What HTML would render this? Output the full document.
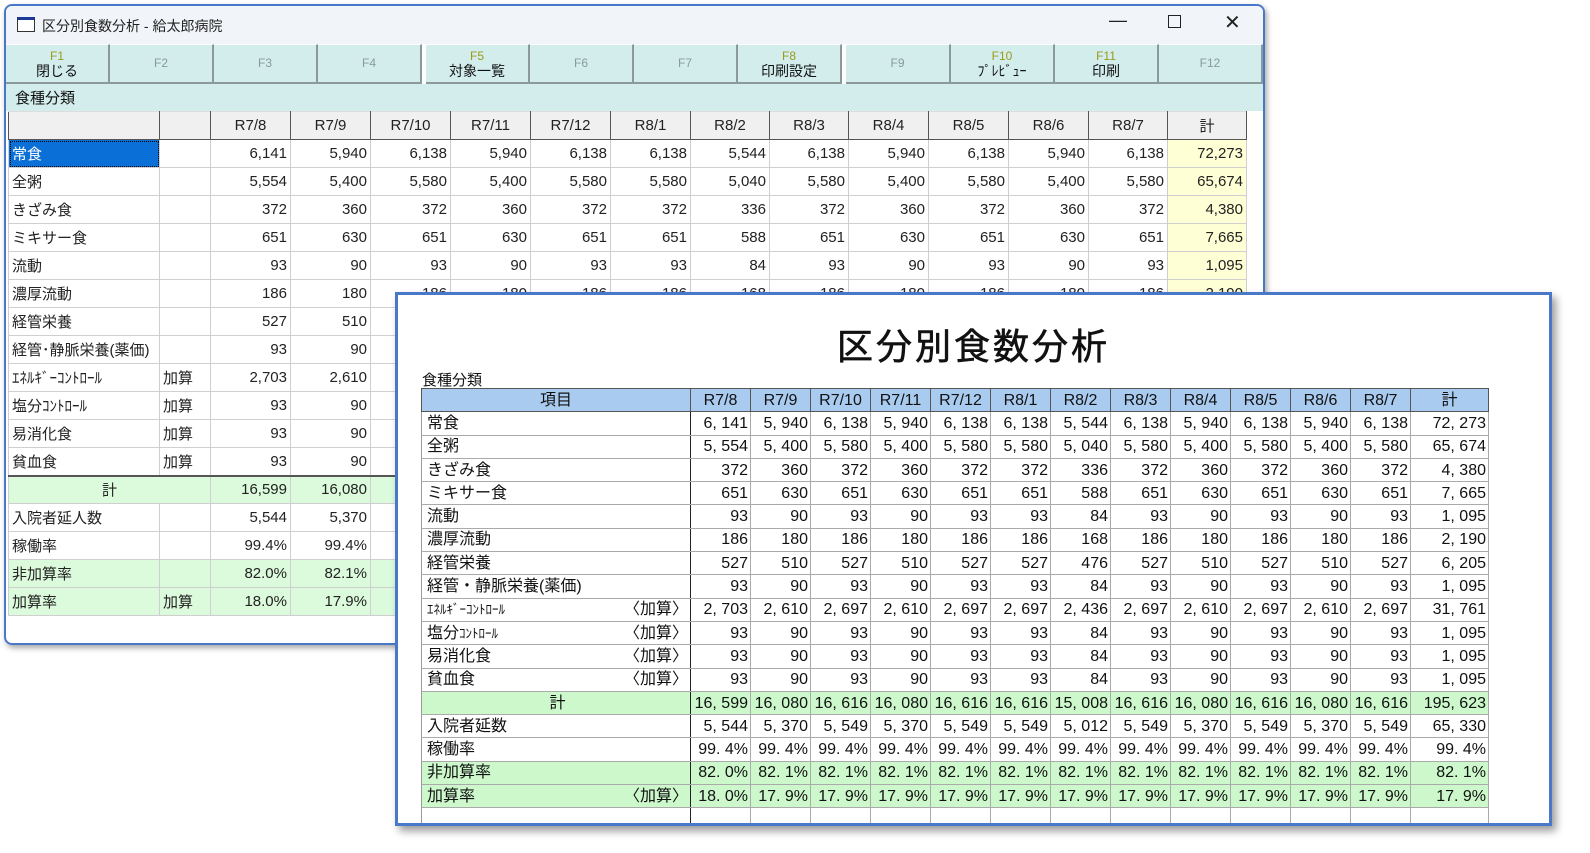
<!DOCTYPE html>
<html><head><meta charset="utf-8">
<style>
*{margin:0;padding:0;box-sizing:border-box}
body{width:1590px;height:853px;background:#fff;position:relative;overflow:hidden;font-family:"Liberation Sans","Noto Sans CJK JP",sans-serif}
#back{position:absolute;left:4px;top:4px;width:1261px;height:641px;border:2px solid #4a78c8;border-radius:8px;background:#fff;box-shadow:2px 3px 6px rgba(0,0,0,.35);overflow:hidden}
#title{position:absolute;left:0;top:0;width:100%;height:38px;background:#f1f4f9;font-size:14px;color:#222}
#title .ic{position:absolute;left:11px;top:11px;width:18px;height:15px;border:1px solid #333;border-top:3px solid #1a3a9a;background:#fff}
#title .t{position:absolute;left:36px;top:10px}
#title .b{position:absolute;top:6px;font-size:18px;color:#222}
#fk{position:absolute;left:0;top:38px;width:100%;height:40px;background:#fff}
.fb{position:absolute;top:0;height:40px;background:#d3eded;border-right:2px solid #8a9a9a;border-bottom:2px solid #8a9a9a;border-top:1px solid #fff;text-align:center;font-size:12px;line-height:13px;color:#8a9a9a;padding-top:5px}
.fb.on span{color:#9a9a1a}
.fb b{display:block;font-weight:normal;color:#111;font-size:14px;line-height:16px}
.fb.off{padding-top:12px}
#sec{position:absolute;left:0;top:78px;width:100%;height:27px;background:#d3eded;font-size:15px;padding:3px 9px;color:#111}
#bt{position:absolute;left:2px;top:105px;border-collapse:collapse;table-layout:fixed;font-size:15px;color:#222}
#bt td{height:28px;border:1px solid #cfcfcf;padding:0 3px;text-align:right;white-space:nowrap;overflow:hidden}
#bt td.l{text-align:left}
#bt tr.h td{background:#f0f0f0;border:1px solid #555;border-top:1px solid #ddd;text-align:center}
#bt td.y{background:#ffffd6}
#bt tr.g td{background:#dcfadc}
#bt tr.k td{border-top:2px solid #555}
#bt td.sel{background:#0a6fd6;color:#fff;outline:1px dotted #000;outline-offset:-2px}
#front{position:absolute;left:395px;top:292px;width:1157px;height:534px;border:3px solid #4a78c8;background:#fff;box-shadow:4px 5px 8px rgba(0,0,0,.4);overflow:hidden}
#ft{position:absolute;left:0;top:23px;width:100%;text-align:center;font-size:36px;font-weight:normal;-webkit-text-stroke:0.6px #111;color:#111;letter-spacing:3px}
#fs{position:absolute;left:24px;top:74px;font-size:15px;color:#111}
#tt{position:absolute;left:23px;top:93px;border-collapse:collapse;table-layout:fixed;font-size:16px;color:#111}
#tt td{height:23.3px;border:1px solid #aaa;border-left:1px solid #999;padding:0 2px;text-align:right;white-space:nowrap;overflow:hidden;line-height:21px}
#tt td.l{text-align:left;padding-left:5px;border-right:1.5px solid #222}
#tt td.t{border-left:1.5px solid #222}
#tt tr.h td{background:#a8cbef;text-align:center;border:1px solid #555}
#tt tr.g td{background:#ccf8cc}
#tt .r{float:right}
</style></head><body>
<div id="back">
 <div id="title"><div class="ic"></div><div class="t">区分別食数分析 - 給太郎病院</div>
  <div class="b" style="left:1103px;top:4px">&#8212;</div>
  <div class="b" style="left:1162px;top:9px;width:13px;height:13px;border:1.5px solid #222"></div>
  <div class="b" style="left:1218px;top:4px;font-size:20px">&#10005;</div>
 </div>
 <div id="fk">
  <div class="fb on" style="left:0;width:104px"><span>F1</span><b>閉じる</b></div>
  <div class="fb off" style="left:104px;width:104px">F2</div>
  <div class="fb off" style="left:208px;width:104px">F3</div>
  <div class="fb off" style="left:312px;width:104px">F4</div>
  <div class="fb on" style="left:420px;width:104px"><span>F5</span><b>対象一覧</b></div>
  <div class="fb off" style="left:524px;width:104px">F6</div>
  <div class="fb off" style="left:628px;width:104px">F7</div>
  <div class="fb on" style="left:732px;width:104px"><span>F8</span><b>印刷設定</b></div>
  <div class="fb off" style="left:840px;width:105px">F9</div>
  <div class="fb on" style="left:945px;width:104px"><span>F10</span><b>ﾌﾟﾚﾋﾞｭｰ</b></div>
  <div class="fb on" style="left:1049px;width:104px"><span>F11</span><b>印刷</b></div>
  <div class="fb off" style="left:1153px;width:104px">F12</div>
 </div>
 <div id="sec">食種分類</div>
 <table id="bt">
 <colgroup><col style="width:151px"><col style="width:51px"><col style="width:80px"><col style="width:80px"><col style="width:80px"><col style="width:80px"><col style="width:80px"><col style="width:80px"><col style="width:79px"><col style="width:79px"><col style="width:80px"><col style="width:80px"><col style="width:80px"><col style="width:79px"><col style="width:79px"></colgroup>
 <tr class="h"><td></td><td></td><td>R7/8</td><td>R7/9</td><td>R7/10</td><td>R7/11</td><td>R7/12</td><td>R8/1</td><td>R8/2</td><td>R8/3</td><td>R8/4</td><td>R8/5</td><td>R8/6</td><td>R8/7</td><td>計</td></tr>
 <tr><td class="l sel">常食</td><td></td><td>6,141</td><td>5,940</td><td>6,138</td><td>5,940</td><td>6,138</td><td>6,138</td><td>5,544</td><td>6,138</td><td>5,940</td><td>6,138</td><td>5,940</td><td>6,138</td><td class="y">72,273</td></tr>
 <tr><td class="l">全粥</td><td></td><td>5,554</td><td>5,400</td><td>5,580</td><td>5,400</td><td>5,580</td><td>5,580</td><td>5,040</td><td>5,580</td><td>5,400</td><td>5,580</td><td>5,400</td><td>5,580</td><td class="y">65,674</td></tr>
 <tr><td class="l">きざみ食</td><td></td><td>372</td><td>360</td><td>372</td><td>360</td><td>372</td><td>372</td><td>336</td><td>372</td><td>360</td><td>372</td><td>360</td><td>372</td><td class="y">4,380</td></tr>
 <tr><td class="l">ミキサー食</td><td></td><td>651</td><td>630</td><td>651</td><td>630</td><td>651</td><td>651</td><td>588</td><td>651</td><td>630</td><td>651</td><td>630</td><td>651</td><td class="y">7,665</td></tr>
 <tr><td class="l">流動</td><td></td><td>93</td><td>90</td><td>93</td><td>90</td><td>93</td><td>93</td><td>84</td><td>93</td><td>90</td><td>93</td><td>90</td><td>93</td><td class="y">1,095</td></tr>
 <tr><td class="l">濃厚流動</td><td></td><td>186</td><td>180</td><td>186</td><td>180</td><td>186</td><td>186</td><td>168</td><td>186</td><td>180</td><td>186</td><td>180</td><td>186</td><td class="y">2,190</td></tr>
 <tr><td class="l">経管栄養</td><td></td><td>527</td><td>510</td><td>527</td><td>510</td><td>527</td><td>527</td><td>476</td><td>527</td><td>510</td><td>527</td><td>510</td><td>527</td><td class="y">6,205</td></tr>
 <tr><td class="l">経管･静脈栄養(薬価)</td><td></td><td>93</td><td>90</td><td>93</td><td>90</td><td>93</td><td>93</td><td>84</td><td>93</td><td>90</td><td>93</td><td>90</td><td>93</td><td class="y">1,095</td></tr>
 <tr><td class="l">ｴﾈﾙｷﾞｰｺﾝﾄﾛｰﾙ</td><td class="l">加算</td><td>2,703</td><td>2,610</td><td>2,697</td><td>2,610</td><td>2,697</td><td>2,697</td><td>2,436</td><td>2,697</td><td>2,610</td><td>2,697</td><td>2,610</td><td>2,697</td><td class="y">31,761</td></tr>
 <tr><td class="l">塩分ｺﾝﾄﾛｰﾙ</td><td class="l">加算</td><td>93</td><td>90</td><td>93</td><td>90</td><td>93</td><td>93</td><td>84</td><td>93</td><td>90</td><td>93</td><td>90</td><td>93</td><td class="y">1,095</td></tr>
 <tr><td class="l">易消化食</td><td class="l">加算</td><td>93</td><td>90</td><td>93</td><td>90</td><td>93</td><td>93</td><td>84</td><td>93</td><td>90</td><td>93</td><td>90</td><td>93</td><td class="y">1,095</td></tr>
 <tr><td class="l">貧血食</td><td class="l">加算</td><td>93</td><td>90</td><td>93</td><td>90</td><td>93</td><td>93</td><td>84</td><td>93</td><td>90</td><td>93</td><td>90</td><td>93</td><td class="y">1,095</td></tr>
 <tr class="g k"><td colspan="2" style="text-align:center">計</td><td>16,599</td><td>16,080</td><td>16,616</td><td>16,080</td><td>16,616</td><td>16,616</td><td>15,008</td><td>16,616</td><td>16,080</td><td>16,616</td><td>16,080</td><td>16,616</td><td>195,623</td></tr>
 <tr><td class="l">入院者延人数</td><td></td><td>5,544</td><td>5,370</td><td>5,549</td><td>5,370</td><td>5,549</td><td>5,549</td><td>5,012</td><td>5,549</td><td>5,370</td><td>5,549</td><td>5,370</td><td>5,549</td><td>65,330</td></tr>
 <tr><td class="l">稼働率</td><td></td><td>99.4%</td><td>99.4%</td><td>99.4%</td><td>99.4%</td><td>99.4%</td><td>99.4%</td><td>99.4%</td><td>99.4%</td><td>99.4%</td><td>99.4%</td><td>99.4%</td><td>99.4%</td><td>99.4%</td></tr>
 <tr class="g"><td class="l">非加算率</td><td></td><td>82.0%</td><td>82.1%</td><td>82.1%</td><td>82.1%</td><td>82.1%</td><td>82.1%</td><td>82.1%</td><td>82.1%</td><td>82.1%</td><td>82.1%</td><td>82.1%</td><td>82.1%</td><td>82.1%</td></tr>
 <tr class="g"><td class="l">加算率</td><td class="l">加算</td><td>18.0%</td><td>17.9%</td><td>17.9%</td><td>17.9%</td><td>17.9%</td><td>17.9%</td><td>17.9%</td><td>17.9%</td><td>17.9%</td><td>17.9%</td><td>17.9%</td><td>17.9%</td><td>17.9%</td></tr>
 </table>
</div>

<div id="front">
 <div id="ft">区分別食数分析</div>
 <div id="fs">食種分類</div>
 <table id="tt">
 <colgroup><col style="width:269px"><col style="width:60px"><col style="width:60px"><col style="width:60px"><col style="width:60px"><col style="width:60px"><col style="width:60px"><col style="width:60px"><col style="width:60px"><col style="width:60px"><col style="width:60px"><col style="width:60px"><col style="width:60px"><col style="width:78px"></colgroup>
 <tr class="h"><td>項目</td><td>R7/8</td><td>R7/9</td><td>R7/10</td><td>R7/11</td><td>R7/12</td><td>R8/1</td><td>R8/2</td><td>R8/3</td><td>R8/4</td><td>R8/5</td><td>R8/6</td><td>R8/7</td><td class="t">計</td></tr>
 <tr><td class="l">常食</td><td>6, 141</td><td>5, 940</td><td>6, 138</td><td>5, 940</td><td>6, 138</td><td>6, 138</td><td>5, 544</td><td>6, 138</td><td>5, 940</td><td>6, 138</td><td>5, 940</td><td>6, 138</td><td class="t">72, 273</td></tr>
 <tr><td class="l">全粥</td><td>5, 554</td><td>5, 400</td><td>5, 580</td><td>5, 400</td><td>5, 580</td><td>5, 580</td><td>5, 040</td><td>5, 580</td><td>5, 400</td><td>5, 580</td><td>5, 400</td><td>5, 580</td><td class="t">65, 674</td></tr>
 <tr><td class="l">きざみ食</td><td>372</td><td>360</td><td>372</td><td>360</td><td>372</td><td>372</td><td>336</td><td>372</td><td>360</td><td>372</td><td>360</td><td>372</td><td class="t">4, 380</td></tr>
 <tr><td class="l">ミキサー食</td><td>651</td><td>630</td><td>651</td><td>630</td><td>651</td><td>651</td><td>588</td><td>651</td><td>630</td><td>651</td><td>630</td><td>651</td><td class="t">7, 665</td></tr>
 <tr><td class="l">流動</td><td>93</td><td>90</td><td>93</td><td>90</td><td>93</td><td>93</td><td>84</td><td>93</td><td>90</td><td>93</td><td>90</td><td>93</td><td class="t">1, 095</td></tr>
 <tr><td class="l">濃厚流動</td><td>186</td><td>180</td><td>186</td><td>180</td><td>186</td><td>186</td><td>168</td><td>186</td><td>180</td><td>186</td><td>180</td><td>186</td><td class="t">2, 190</td></tr>
 <tr><td class="l">経管栄養</td><td>527</td><td>510</td><td>527</td><td>510</td><td>527</td><td>527</td><td>476</td><td>527</td><td>510</td><td>527</td><td>510</td><td>527</td><td class="t">6, 205</td></tr>
 <tr><td class="l">経管・静脈栄養(薬価)</td><td>93</td><td>90</td><td>93</td><td>90</td><td>93</td><td>93</td><td>84</td><td>93</td><td>90</td><td>93</td><td>90</td><td>93</td><td class="t">1, 095</td></tr>
 <tr><td class="l"><span style="font-size:13px">ｴﾈﾙｷﾞｰｺﾝﾄﾛｰﾙ</span><span class="r">〈加算〉</span></td><td>2, 703</td><td>2, 610</td><td>2, 697</td><td>2, 610</td><td>2, 697</td><td>2, 697</td><td>2, 436</td><td>2, 697</td><td>2, 610</td><td>2, 697</td><td>2, 610</td><td>2, 697</td><td class="t">31, 761</td></tr>
 <tr><td class="l">塩分<span style="font-size:13px">ｺﾝﾄﾛｰﾙ</span><span class="r">〈加算〉</span></td><td>93</td><td>90</td><td>93</td><td>90</td><td>93</td><td>93</td><td>84</td><td>93</td><td>90</td><td>93</td><td>90</td><td>93</td><td class="t">1, 095</td></tr>
 <tr><td class="l">易消化食<span class="r">〈加算〉</span></td><td>93</td><td>90</td><td>93</td><td>90</td><td>93</td><td>93</td><td>84</td><td>93</td><td>90</td><td>93</td><td>90</td><td>93</td><td class="t">1, 095</td></tr>
 <tr><td class="l">貧血食<span class="r">〈加算〉</span></td><td>93</td><td>90</td><td>93</td><td>90</td><td>93</td><td>93</td><td>84</td><td>93</td><td>90</td><td>93</td><td>90</td><td>93</td><td class="t">1, 095</td></tr>
 <tr class="g"><td class="l" style="text-align:center">計</td><td>16, 599</td><td>16, 080</td><td>16, 616</td><td>16, 080</td><td>16, 616</td><td>16, 616</td><td>15, 008</td><td>16, 616</td><td>16, 080</td><td>16, 616</td><td>16, 080</td><td>16, 616</td><td class="t">195, 623</td></tr>
 <tr><td class="l">入院者延数</td><td>5, 544</td><td>5, 370</td><td>5, 549</td><td>5, 370</td><td>5, 549</td><td>5, 549</td><td>5, 012</td><td>5, 549</td><td>5, 370</td><td>5, 549</td><td>5, 370</td><td>5, 549</td><td class="t">65, 330</td></tr>
 <tr><td class="l">稼働率</td><td>99. 4%</td><td>99. 4%</td><td>99. 4%</td><td>99. 4%</td><td>99. 4%</td><td>99. 4%</td><td>99. 4%</td><td>99. 4%</td><td>99. 4%</td><td>99. 4%</td><td>99. 4%</td><td>99. 4%</td><td class="t">99. 4%</td></tr>
 <tr class="g"><td class="l">非加算率</td><td>82. 0%</td><td>82. 1%</td><td>82. 1%</td><td>82. 1%</td><td>82. 1%</td><td>82. 1%</td><td>82. 1%</td><td>82. 1%</td><td>82. 1%</td><td>82. 1%</td><td>82. 1%</td><td>82. 1%</td><td class="t">82. 1%</td></tr>
 <tr class="g"><td class="l">加算率<span class="r">〈加算〉</span></td><td>18. 0%</td><td>17. 9%</td><td>17. 9%</td><td>17. 9%</td><td>17. 9%</td><td>17. 9%</td><td>17. 9%</td><td>17. 9%</td><td>17. 9%</td><td>17. 9%</td><td>17. 9%</td><td>17. 9%</td><td class="t">17. 9%</td></tr>
 <tr><td class="l"></td><td></td><td></td><td></td><td></td><td></td><td></td><td></td><td></td><td></td><td></td><td></td><td></td><td class="t"></td></tr>
 </table>
</div>
</body></html>
